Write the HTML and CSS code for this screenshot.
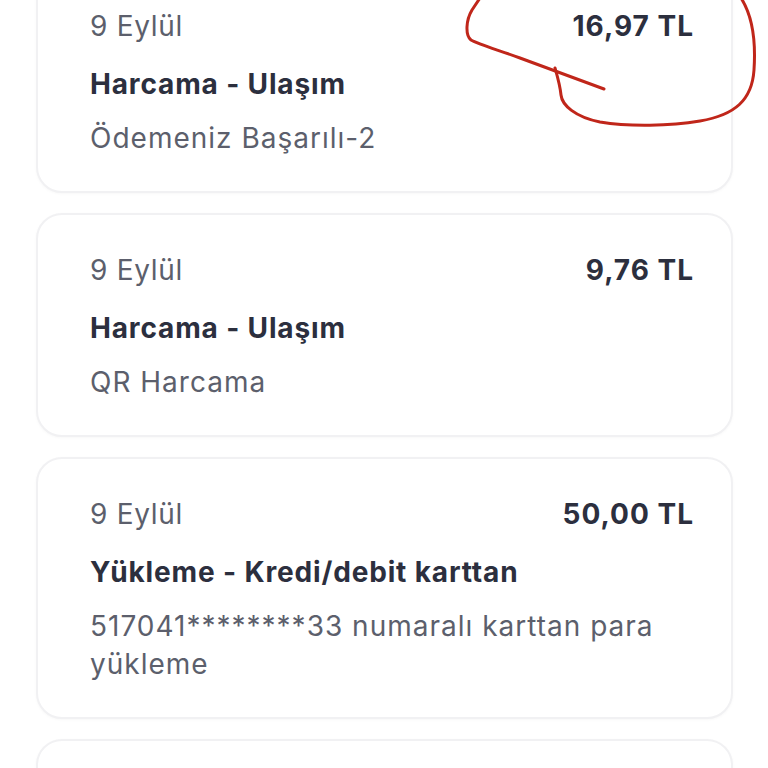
FILE: index.html
```html
<!DOCTYPE html>
<html lang="tr">
<head>
<meta charset="utf-8">
<title>Hareketler</title>
<link rel="stylesheet" href="styles.css">
</head>
<body>
<main class="list">
  <section class="card">
    <div class="row">
      <span class="date">9 Eylül</span>
      <span class="amount">16,97 TL</span>
    </div>
    <div class="title">Harcama - Ulaşım</div>
    <div class="desc">Ödemeniz Başarılı-2</div>
  </section>
  <section class="card">
    <div class="row">
      <span class="date">9 Eylül</span>
      <span class="amount">9,76 TL</span>
    </div>
    <div class="title">Harcama - Ulaşım</div>
    <div class="desc">QR Harcama</div>
  </section>
  <section class="card">
    <div class="row">
      <span class="date">9 Eylül</span>
      <span class="amount">50,00 TL</span>
    </div>
    <div class="title">Yükleme - Kredi/debit karttan</div>
    <div class="desc">517041********33 numaralı karttan para yükleme</div>
  </section>
  <section class="card card-next" aria-hidden="true"></section>
</main>
<svg class="scribble" width="768" height="140" viewBox="0 0 768 140" aria-hidden="true">
  <path d="M741,-2 C752,15 756,40 754,70 C752,100 735,115 700,121 C670,126 630,127 600,122 C575,117 562,105 561,95 C560,85 557,75 555,68" />
  <path d="M604,89 L520,58 C495,49 478,44 471,40 C465,35 466,20 472,10 L480,-2" />
</svg>
</body>
</html>
```

FILE: styles.css
```css
html, body {
  margin: 0;
  padding: 0;
  background: #ffffff;
}

body {
  font-family: "Inter", "Noto Sans", sans-serif;
  width: 768px;
  height: 768px;
  overflow: hidden;
  position: relative;
}

.list {
  display: flex;
  flex-direction: column;
  gap: 20px;
  margin-top: -31px;
  padding: 0 35px 0 36px;
}

.card {
  background: #ffffff;
  border: 2px solid #f1f1f3;
  border-radius: 26px;
  box-shadow: 0 1px 3px rgba(0, 0, 0, 0.03);
  padding: 37px 37px 34px 52px;
}

.card-next {
  min-height: 160px;
}

.row {
  display: flex;
  justify-content: space-between;
  align-items: center;
  height: 36px;
}

.date {
  font-size: 28px;
  line-height: 36px;
  color: #5c5f6c;
  letter-spacing: 0.7px;
}

.amount {
  font-size: 28px;
  line-height: 36px;
  font-weight: 700;
  color: #2c2f3e;
  letter-spacing: 1px;
}

.title {
  margin-top: 22px;
  font-size: 28px;
  line-height: 36px;
  font-weight: 700;
  color: #2c2f3e;
  letter-spacing: 0.85px;
}

.desc {
  margin-top: 17px;
  font-size: 28px;
  line-height: 38px;
  color: #5c5f6c;
  letter-spacing: 1px;
  max-width: 590px;
}

.scribble {
  position: absolute;
  top: 0;
  left: 0;
  pointer-events: none;
  fill: none;
  stroke: #c0261a;
  stroke-width: 3;
  stroke-linecap: round;
  stroke-linejoin: round;
}
```
